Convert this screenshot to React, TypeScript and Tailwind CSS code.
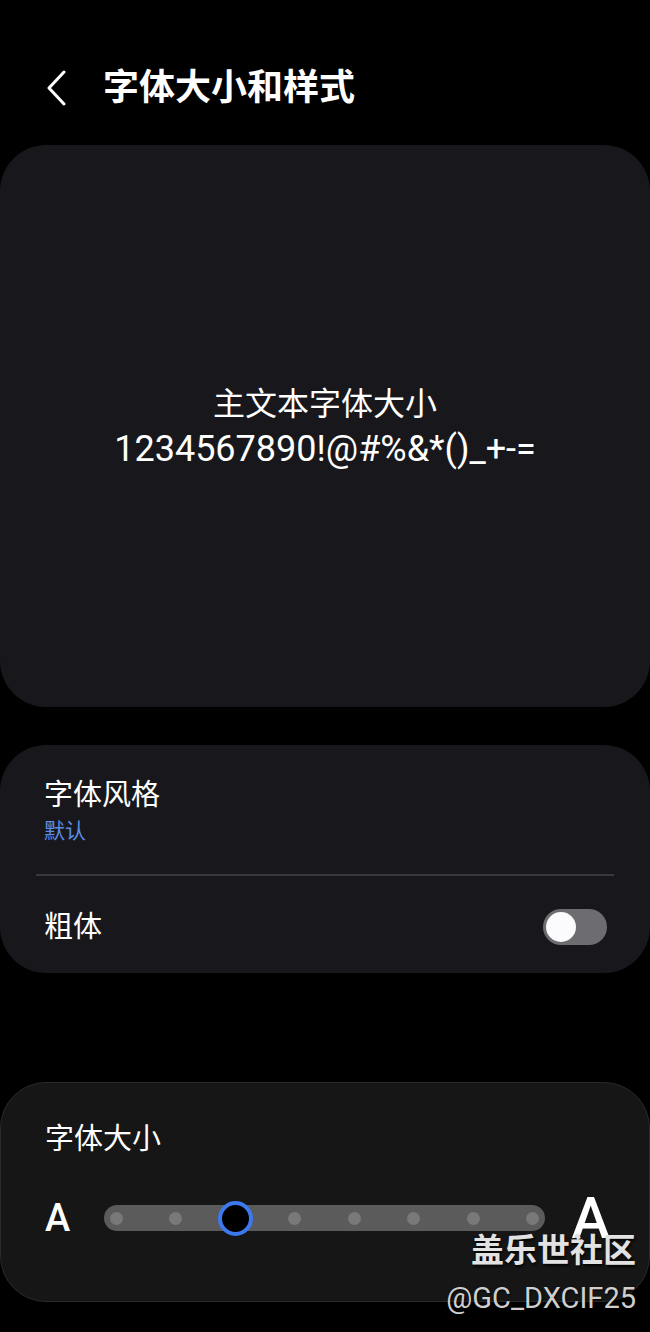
import React from 'react';

const FONT = 'font-["Roboto","Noto_Sans_CJK_SC",sans-serif]';

function BackIcon() {
  return (
    <svg width="22" height="36" viewBox="0 0 22 36" fill="none">
      <path d="M18 2 L3 18 L18 34" stroke="white" strokeWidth="3" strokeLinecap="round" strokeLinejoin="round" />
    </svg>
  );
}

function Toggle() {
  return (
    <div className="w-[64px] h-[36px] rounded-full bg-[#6d6c71] flex items-center px-[3px]">
      <div className="w-[30px] h-[30px] rounded-full bg-[#fbfbfd]" />
    </div>
  );
}

function SizeSlider({ value }: { value: number }) {
  const steps = [0, 1, 2, 3, 4, 5, 6, 7];
  return (
    <div className="flex-1 h-[26px] rounded-full bg-[#5b5b5b] flex items-center justify-between px-[6px]">
      {steps.map((s) => (
        <div key={s} className="w-[12px] h-[12px] flex items-center justify-center">
          {s === value ? (
            <div className="shrink-0 w-[35px] h-[35px] rounded-full bg-black border-[4px] border-[#3c78ee]" />
          ) : (
            <div className="shrink-0 w-[13px] h-[13px] rounded-full bg-[#797979]" />
          )}
        </div>
      ))}
    </div>
  );
}

export default function App() {
  return (
    <div className={`relative w-[650px] h-[1332px] bg-black text-white overflow-hidden ${FONT}`}>
      {/* Header */}
      <div className="h-[145px] pt-[70px] pl-[46px]">
        <div className="flex items-center gap-[35px] h-[36px]">
          <BackIcon />
          <h1 className="text-[36px] font-bold leading-none">字体大小和样式</h1>
        </div>
      </div>

      {/* Preview */}
      <div className="h-[562px] rounded-[46px] bg-[#18181c] flex flex-col items-center justify-center">
        <p className="text-[32px] leading-[44px] mt-[2px]">主文本字体大小</p>
        <p className="text-[36px] leading-[46px]">1234567890!@#%&amp;*()_+-=</p>
      </div>

      {/* Style card */}
      <div className="mt-[38px] h-[228px] rounded-[46px] bg-[#18181c] flex flex-col">
        <div className="h-[129px] px-[44px] pt-[30px] flex flex-col">
          <span className="text-[29px] leading-[40px]">字体风格</span>
          <span className="text-[21px] leading-[28px] text-[#5b8de8] mt-[2px]">默认</span>
        </div>
        <div className="mx-[36px] h-[2px] bg-[#38383c]" />
        <div className="flex-1 flex items-center justify-between pl-[44px] pr-[43px] pt-[4px]">
          <span className="text-[29px] leading-[40px]">粗体</span>
          <Toggle />
        </div>
      </div>

      {/* Size card */}
      <div className="mt-[109px] h-[220px] rounded-[46px] bg-[#161616] border border-[#2a2a2a] flex flex-col pl-[44px] pr-[39px]">
        <span className="mt-[36px] text-[29px] leading-[40px]">字体大小</span>
        <div className="mt-[30px] flex items-center">
          <span className="w-[59px] text-[38px] font-medium leading-none">A</span>
          <SizeSlider value={2} />
          <span className="w-[65px] text-right text-[58px] font-medium leading-none">A</span>
        </div>
      </div>

      {/* Watermark */}
      <div className="absolute right-[14px] top-[1230px] flex flex-col items-end">
        <span className="text-[33px] font-bold leading-[42px] text-[#e2e2e2] [text-shadow:1px_2px_3px_rgba(0,0,0,0.9)]">盖乐世社区</span>
        <span className="mt-[6px] text-[29px] leading-[40px] text-[#cfcfcf] [text-shadow:1px_1px_2px_rgba(0,0,0,0.9)]">@GC_DXCIF25</span>
      </div>
    </div>
  );
}
